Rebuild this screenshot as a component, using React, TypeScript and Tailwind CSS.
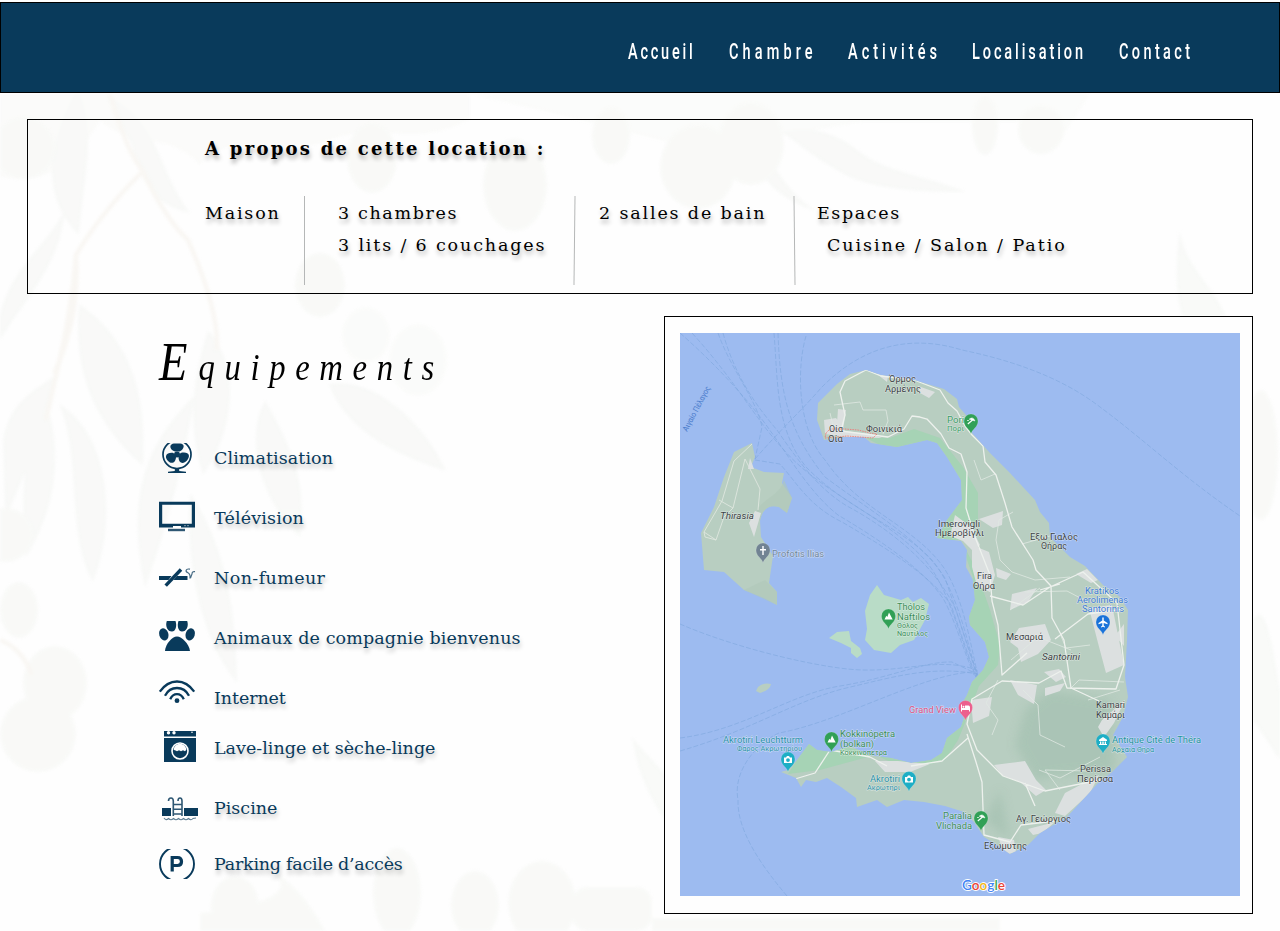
import type { ReactNode } from 'react';

const SLAB = "font-['DejaVu_Serif',serif]";
const SHADOW = '[text-shadow:1px_4px_4px_rgba(0,0,0,0.3)]';

const Foliage = () => (
  <svg className="pointer-events-none absolute inset-0 h-full w-full opacity-70 blur-[1.5px]" viewBox="0 0 1280 931" fill="#f3f5f2" aria-hidden="true">
    <g opacity=".75">
      <path d="M0 94H470V118C420 150 380 120 330 140C280 160 220 130 200 165C170 130 130 150 100 120C60 190 20 180 0 177Z" fill="#f8f9f6" />
      <path d="M470 94H1090L1060 140Q1035 155 1025 122H860L700 150L540 110Z" fill="#f8faf7" />
      <path d="M80 94C95 130 86 165 79 235C40 195 48 145 74 94Z" />
      <path d="M105 94C160 120 155 165 190 213C150 205 138 174 132 145Z" />
      <path d="M0 315C10 270 43 250 65 210C60 265 28 295 0 340Z" />
      <path d="M79 304C122 333 148 381 143 466C98 427 72 376 79 304Z" />
      <path d="M3 440C10 399 37 390 54 376C47 421 28 467 5 520Z" />
      <path d="M47 404C20 440 21 510 26 557C57 507 62 452 47 404Z" />
      <path d="M59 404C107 432 119 516 93 582C65 534 83 461 59 404Z" />
      <path d="M195 395C150 440 124 489 145 588C166 528 180 482 195 395Z" />
      <path d="M208 330C241 366 235 430 203 475C185 420 195 372 208 330Z" />
      <path d="M265 400C245 437 258 498 300 537C308 479 288 441 265 400Z" />
      <path d="M329 384C374 376 425 424 446 471C387 453 343 425 329 384Z" />
      <path d="M190 493C228 548 236 619 237 683C200 638 185 560 190 493Z" />
      <path d="M782 132C810 125 835 132 860 152C885 172 925 175 966 192C920 192 870 190 840 172C815 158 800 145 782 132Z" />
      <path d="M757 110C765 160 785 190 815 210C790 205 755 180 748 145Z" />
      <path d="M1180 230C1184 265 1210 281 1226 316L1182 316C1174 287 1176 256 1180 230Z" />
      <path d="M632 737C662 774 703 803 706 862C658 825 638 778 632 737Z" />
      <path d="M1253 620C1266 597 1273 650 1280 690V760L1253 720Z" />
    </g>
    <g fill="#f7f8f5">
      <circle cx="24" cy="148" r="31" /><ellipse cx="55" cy="683" rx="32" ry="37" />
      <circle cx="38" cy="734" r="38" /><circle cx="6" cy="535" r="27" />
      <ellipse cx="19" cy="610" rx="19" ry="28" />
      <ellipse cx="372" cy="158" rx="25" ry="35" /><ellipse cx="515" cy="185" rx="32" ry="46" />
      <ellipse cx="611" cy="136" rx="19" ry="28" /><ellipse cx="698" cy="167" rx="38" ry="42" />
      <ellipse cx="751" cy="144" rx="33" ry="41" /><ellipse cx="1041" cy="130" rx="23" ry="24" />
      <ellipse cx="985" cy="126" rx="13" ry="29" /><ellipse cx="320" cy="285" rx="25" ry="32" />
      <ellipse cx="418" cy="360" rx="29" ry="36" opacity=".6" /><ellipse cx="366" cy="335" rx="24" ry="28" opacity=".6" />
      <ellipse cx="235" cy="906" rx="24" ry="30" /><ellipse cx="397" cy="893" rx="24" ry="45" />
      <ellipse cx="475" cy="905" rx="24" ry="34" /><ellipse cx="542" cy="903" rx="34" ry="42" />
      <path d="M270 870Q302 886 325 931H200V913Q310 900 270 870Z" /><rect x="572" y="887" width="80" height="44" rx="15" />
      <ellipse cx="1261" cy="455" rx="17" ry="65" />
      <path d="M652 918H1000V931H652Z" />
    </g>
    <g fill="none" stroke="#f7f4ef" strokeWidth="4.5">
      <path d="M110 94Q126 150 142 170Q166 220 188 240Q219 310 217 350" /><path d="M142 172Q100 214 76 255Q72 310 55 380L46 420" />
      <path d="M76 255Q80 318 54 374" /><path d="M0 640Q22 648 32 675" />
    </g>
  </svg>
);

const links = [
  { label: 'Accueil', box: 'w-[101px]', track: 'tracking-[4.2px]' },
  { label: 'Chambre', box: 'w-[119px]', track: 'tracking-[6.2px]' },
  { label: 'Activités', box: 'w-[124px]', track: 'tracking-[6.1px]' },
  { label: 'Localisation', box: 'w-[147px]', track: 'tracking-[4.4px]' },
  { label: 'Contact', box: 'w-[80px]', track: 'tracking-[5.1px]' },
];

const Header = () => (
  <header className="mt-[2px] flex h-[91px] items-center justify-end border border-black bg-[#093a5b] pr-[80px]">
    <nav className="flex pt-[8px]">
      {links.map((l) => (
        <a key={l.label} href="#" className={`${l.box} block`}>
          <span className={`${l.track} inline-block origin-left scale-x-[.66] whitespace-nowrap font-['Roboto',sans-serif] text-[22px] leading-[26px] font-medium text-white`}>{l.label}</span>
        </a>
      ))}
    </nav>
  </header>
);

const Rule = ({ tilt }: { tilt: string }) => <div className={`h-[89px] w-px bg-[#b5b7b7] ${tilt}`} />;

const About = () => (
  <section className={`mx-[27px] mt-[26px] h-[175px] border border-black pl-[177px] text-black ${SLAB} ${SHADOW}`}>
    <h2 className="pt-[16px] text-[18px] leading-[26px] font-bold tracking-[2.27px] whitespace-nowrap">A propos de cette location :</h2>
    <div className="mt-[34px] flex text-[17.5px] leading-[32px] whitespace-nowrap">
      <p className="w-[99px] pt-px tracking-[1.8px]">Maison</p>
      <Rule tilt="" />
      <div className="w-[268.5px] pt-px pl-[33px]">
        <p className="tracking-[1.65px]">3 chambres</p>
        <p className="tracking-[1.85px]">3 lits / 6 couchages</p>
      </div>
      <Rule tilt="rotate-[0.65deg]" />
      <p className="w-[219.5px] pt-px pl-[24.5px] tracking-[1.85px]">2 salles de bain</p>
      <Rule tilt="-rotate-[0.65deg]" />
      <div className="pt-px pl-[22px]">
        <p className="tracking-[1.6px]">Espaces</p>
        <p className="pl-[10px] tracking-[1.95px]">Cuisine / Salon / Patio</p>
      </div>
    </div>
  </section>
);

const Fan = () => (
  <g>
    <clipPath id="fan-box"><path d="M0 0H40V30H0Z" /></clipPath>
    <g clipPath="url(#fan-box)">
      <circle cx="18" cy="11.5" r="14" fill="none" stroke="currentColor" strokeWidth="1.7" />
      <path d="M16 8.5C9 6 11 .5 15 .5H21C26 .5 26 6 20.5 8.5ZM14.5 10C7 9 5 14 9 18C13 22 17 19 17 14ZM21.5 10C30 8 32 13 28 17.5C24 22 19.5 20 19.5 14Z" />
      <circle cx="18" cy="11.5" r="3" />
      <path d="M15.8 25H20.2V28L27 28.7V30H9V28.7L15.8 28Z" />
    </g>
  </g>
);
const Tv = () => (
  <g>
    <path d="M0-1.3H36V24.5H0ZM3.2 1.8V20.8H32.8V1.8Z" fillRule="evenodd" />
    <path d="M14 23H22V25H14Z" fill="#fff" />
    <path d="M9 25.8H26V28.2H9Z" opacity=".85" />
    <path d="M25 22.7h2m1 0h2" stroke="#fff" strokeWidth=".7" opacity=".7" />
  </g>
);
const Smoke = () => (
  <g>
    <path d="M0 13H12.5L9.5 17H0ZM18 13H28.5V17H14.5Z" />
    <path d="M6.7 22.6L22 6.5" stroke="currentColor" strokeWidth="3.4" />
    <path d="M31 6.2C26.5 5.2 26 8.5 29 9.8Q31.500 11 31 15.5M36 8.7Q33 8 33 11L31.500 15" fill="none" stroke="currentColor" strokeWidth="1.2" opacity=".75" />
  </g>
);
const Paw = () => (
  <g>
    <path d="M7.800-2H16.500C18.300 3 16.500 8.600 13 8.600C8.500 8.600 6 3 7.800-2ZM19.500-2H28.200C30 3 27.500 8.600 23 8.600C19.500 8.600 17.700 3 19.500-2Z" />
    <ellipse cx="4.800" cy="11.300" rx="4.600" ry="6.200" transform="rotate(-18 4.800 11.300)" />
    <ellipse cx="31.200" cy="11.300" rx="4.600" ry="6.200" transform="rotate(18 31.200 11.300)" />
    <path d="M6 28C6.500 21 13 13.500 18 13.500C23 13.500 30 21 31 28Z" />
  </g>
);
const Wifi = () => (
  <g fill="none" stroke="currentColor" strokeWidth="2.300">
    <path d="M.8 8.700Q8-1.500 18-1.500T35.200 8.700M6 12.700Q10 5 18 5T30 12.700M11.200 16.200Q13.500 11.200 18 11.200T24.800 16.200" />
    <circle cx="18" cy="17.700" r="2.400" fill="currentColor" stroke="none" />
  </g>
);
const Washer = () => (
  <g>
    <path d="M5-2H37V3.500H5ZM5 5H37V29H5Z" />
    <circle cx="9.500" cy="-.2" r="1.700" fill="#fff" /><circle cx="15" cy="-.2" r="1.700" fill="#fff" /><circle cx="33" cy="-.7" r=".8" fill="#fff" />
    <circle cx="21" cy="18" r="8" fill="none" stroke="#fff" strokeWidth="1.600" />
    <path d="M14.800 17A6.200 6.200 0 0 1 27.200 17L26 18.300L24 17.300L22 18.300L20 17.300L18 18.300L16 17.300Z" fill="#fff" />
  </g>
);
const Pool = () => (
  <g>
    <path d="M3 15H12V23H3ZM25 15H39V23H25Z" />
    <path d="M9.500 8Q9.500 5 12 5Q14.300 5 14.300 8V23M19 8Q19 5 21 5Q23 5 23 8V23M14 11.500h9M14 16.300h9M14 21h9" fill="none" stroke="currentColor" strokeWidth="1.600" opacity=".85" />
    <path d="M5 25Q7 28 9.500 25.500Q12 28 14.500 25.500Q17 28 19.500 25.500Q22 28 24.500 25.500Q27 28 29.500 25.500Q32 28 34 25.500L37 25" fill="none" stroke="currentColor" strokeWidth="1.100" opacity=".65" />
  </g>
);
const Parking = () => (
  <g fill="none" stroke="currentColor">
    <clipPath id="parking-box"><path d="M0 0H40V30H0Z" /></clipPath>
    <circle cx="18" cy="15" r="17" strokeWidth="1.900" clipPath="url(#parking-box)" />
    <path d="M13.200 22.500V8.500H18.500Q22.500 8.500 22.500 12.500T18.500 16.500H13.200" strokeWidth="3.200" />
  </g>
);

const amenities: { label: string; icon: ReactNode; gap: string; track: string }[] = [
  { label: 'Climatisation', icon: <Fan />, gap: 'mb-[30px]', track: 'tracking-[0.07px]' },
  { label: 'Télévision', icon: <Tv />, gap: 'mb-[30px]', track: 'tracking-[0.15px]' },
  { label: 'Non-fumeur', icon: <Smoke />, gap: 'mb-[30px]', track: 'tracking-[0.4px]' },
  { label: 'Animaux de compagnie bienvenus', icon: <Paw />, gap: 'mb-[30px]', track: 'tracking-[0.12px]' },
  { label: 'Internet', icon: <Wifi />, gap: 'mb-[20px]', track: 'tracking-[-0.1px]' },
  { label: 'Lave-linge et sèche-linge', icon: <Washer />, gap: 'mb-[30px]', track: 'tracking-[0px]' },
  { label: 'Piscine', icon: <Pool />, gap: 'mb-[26px]', track: 'tracking-[0px]' },
  { label: 'Parking facile d’accès', icon: <Parking />, gap: '', track: 'tracking-[-0.25px]' },
];

const Amenities = () => (
  <section className="w-[637px] pl-[159px] pt-[19px]">
    <h1 className="h-[60px] whitespace-nowrap font-['Liberation_Serif',serif] text-[38px] leading-[60px] text-black italic">
      <span className="inline-block origin-left scale-x-[.86] tracking-[11.2px]"><span className="text-[54px] leading-none tracking-[13px]">E</span>quipements</span>
    </h1>
    <ul className="mt-[48px] text-[#093a5b]">
      {amenities.map((a) => (
        <li key={a.label} className={`${a.gap} flex h-[30px] items-center`}>
          <svg className="mr-[15px] h-[30px] w-[40px] overflow-visible" viewBox="0 0 40 30" fill="currentColor">{a.icon}</svg>
          <span className={`${a.track} ${SLAB} text-[17.5px] leading-[30px] whitespace-nowrap [text-shadow:1px_4px_4px_rgba(0,0,0,0.25)]`}>{a.label}</span>
        </li>
      ))}
    </ul>
  </section>
);

type Label = [text: string, x: number, y: number, width: number, size?: number, color?: string];
const labels: Label[] = [
  ['Όρμος', 889, 382, 27], ['Αρμένης', 885, 392, 36],
  ['Oία', 829, 432, 14], ['Οία', 828, 441.5, 15], ['Φοινικιά', 866, 432, 36],
  ['Pori', 947, 423, 17, 9, '#3b9b68'], ['Πορι', 947, 431, 17, 7, '#3b9b68'],
  ['Imerovigli', 938, 526.5, 42], ['Ημεροβίγλι', 935, 536, 49],
  ['Εξω Γιαλός', 1030, 540, 48], ['Θήρας', 1041, 549, 26],
  ['Fira', 977, 579, 15], ['Θήρα', 973, 588.5, 22],
  ['Kratikos', 1085, 593.5, 34, 9.4, '#3b79d4'], ['Aerolimenas', 1077, 603, 51, 9.4, '#3b79d4'], ['Santorinis', 1082, 612, 42, 9.4, '#3b79d4'],
  ['Profotis Ilias', 772, 556.5, 52, 9.4, '#71869a'],
  ['Thólos', 897, 610, 28, 9.4, '#3b8d57'], ['Naftilos', 897, 620, 33, 9.4, '#3b8d57'],
  ['Θόλος', 897, 628, 21, 7.2, '#3b8d57'], ['Ναυτίλος', 897, 635.5, 31, 7.2, '#3b8d57'],
  ['Μεσαριά', 1006, 640, 37],
  ['Grand View', 909, 713, 47, 9.6, '#df527f'],
  ['Kamari', 1096, 708, 29], ['Καμάρι', 1096, 717.5, 29],
  ['Akrotiri Leuchtturm', 723, 742.5, 80, 9.6, '#2b91a9'], ['Φάρος Ακρωτηρίου', 737, 750.5, 65, 7.2, '#2b91a9'],
  ['Kokkinópetra', 840, 736.5, 55, 9.4, '#3b8d57'], ['(bolkan)', 840, 747, 34, 9.4, '#3b8d57'], ['Κοκκινοπετρα', 840, 755, 47, 7.2, '#3b8d57'],
  ['Antique Cité de Théra', 1112, 743, 89, 9.6, '#22949d'], ['Αρχαία Θήρα', 1112, 751.5, 42, 7.2, '#22949d'],
  ['Akrotiri', 870, 781.5, 30, 9.4, '#2b91a9'], ['Ακρωτήρι', 867, 790, 33, 7.2, '#2b91a9'],
  ['Perissa', 1080, 772, 31], ['Περίσσα', 1077, 781.5, 36],
  ['Paralia', 943, 819, 29, 9.2, '#3b8d57'], ['Vlichada', 936, 828.5, 36, 9.2, '#3b8d57'],
  ['Αγ. Γεώργιος', 1016, 821.5, 55], ['Εξωμυτης', 984, 849, 43],
];

const Pin = ({ x, y, color, children }: { x: number; y: number; color: string; children: ReactNode }) => (
  <g transform={`translate(${x} ${y})`}>
    <path d="M0 11C-1 6-7 4.500-7-2A7 7 0 0 1 7-2C7 4.500 1 6 0 11Z" fill={color} stroke="#fff" strokeOpacity=".3" strokeWidth=".5" />
    <g fill="#fff" stroke="none">{children}</g>
  </g>
);
const Peak = () => <path d="M-4 1.500L-2.200-2.200L-1.200-1L.5-5.500L4.200 1.500Z" />;
const Brolly = () => (
  <g fill="none" stroke="#fff" strokeWidth="1.2"><path d="M-1.8-3.8Q2-7 4-2Z" fill="#fff" strokeWidth=".5" /><path d="M1.5-3L-3.2 1" /><path d="M-3.7-2.5h1.4" /></g>
);
const Camera = () => <path fillRule="evenodd" d="M-4-3.5H-2L-1-5H1L2-3.5H4V2H-4ZM0-2.8A1.9 1.9 0 1 0 0 1A1.9 1.9 0 1 0 0-2.8Z" />;

const IslandMap = () => (
  <svg className="block h-[563px] w-[560px] font-[Roboto,sans-serif]" viewBox="680 333 560 563" role="img">
    <defs>
      <clipPath id="land"><use href="#main" /></clipPath>
      <filter id="soft"><feGaussianBlur stdDeviation="5" /></filter>
    </defs>
    <path fill="#9dbbf0" d="M680 333h560v563H680Z" />
    <g fill="none" stroke="#80a8df" strokeWidth=".65" strokeDasharray="5 2">
      <path d="M680 333C720 368 753 406 769 429C790 458 810 493 838 515C880 540 925 570 944 600C955 620 965 655 975 677" />
      <path d="M692 333C735 380 755 419 784 450C820 492 885 516 925 560C950 590 960 640 976 677" />
      <path d="M718 333C731 370 757 400 762 427L755 459" /><path d="M723 333C735 377 758 408 777 430C797 459 817 488 847 506C890 529 935 565 956 610L977 676" />
      <path d="M774 333C778 380 775 430 807 468C850 511 900 526 932 560C956 589 966 635 977 676" />
      <path d="M778 333C780 390 787 430 825 477C870 511 919 538 945 578L978 676" />
      <path d="M806 336C796 370 798 430 825 460C860 512 914 525 944 568C963 597 970 642 978 676" />
      <path d="M755 459C780 430 803 409 821 388C865 343 914 335 962 350C1010 360 1058 376 1096 404C1145 440 1180 475 1240 516" />
      <path d="M755 460L780 464C797 483 809 506 842 522C890 550 933 578 951 605L976 677" />
      <path d="M680 624C740 650 829 670 864 670C910 671 940 657 977 670L973 707" />
      <path d="M680 738C744 730 790 694 840 686C890 678 925 661 952 662L977 674" />
      <path d="M680 751C752 730 788 704 842 689C890 678 930 665 977 674" />
      <path d="M972 672C920 675 840 722 779 733C760 741 732 769 738 800C737 830 760 864 787 896" />
    </g>
    <path fill="#b8cec1" d="M752 443L755 457L751 467L764 472L784 473L782 483L792 498L787 513L779 507C768 504 762 510 760 521L761 537L773 556L769 583L777 592V605L764 598L744 590L724 572L704 570L701 533L714 507L724 477L734 452Z" />
    <path fill="#afc8b9" d="M784 480L792 498L787 513L779 507C768 504 762 510 760 521L755 515C760 498 779 498 784 480ZM744 590L765 580L777 592V605Z" opacity=".6" />
    <path fill="#b9dcc7" d="M877 585L884 595L901 600L908 597L913 602L921 598L929 604L925 620L914 640L900 645L891 653L874 650L865 640L867 629L865 611L870 595ZM829 638L837 632L849 631L851 641L860 648L862 654L857 658L851 653V648L841 643Z" />
    <path fill="#b8cec1" d="M758 687Q764 682 771 684Q770 690 760 693L756 691Z" />
    <path id="main" fill="#b8cec1" d="M866 370L881 375L914 380L944 389L957 399L959 407L966 415L972 433L990 453L1010 473L1035 500L1040 512L1049 523L1050 537L1070 557L1085 566L1103 585L1120 597L1128 610L1127 640L1125 677L1128 697L1123 717L1113 735L1127 757L1112 772L1098 783L1067 817L1040 833L1028 845L1010 854L997 845L984 837L974 822L964 812L945 806L924 802L904 800L887 807L877 800L857 807L856 798L841 787L827 778L816 782L806 780L801 787L796 778L781 772L788 770L797 760L809 744L817 750L831 752L851 746L868 755L891 758L911 763L931 760L942 753L947 738L961 727L964 718L960 707L967 695L972 682L983 670L989 657L985 642L970 625L969 617L975 600L973 580L966 567L967 550L961 541L937 538L947 520L962 500L961 480L947 457L937 443L927 440L897 447L871 443L864 437L846 437L824 440L821 431L817 420L818 403L837 384L850 374Z" />
    <g clipPath="url(#land)">
      <g fill="#a2d4b3">
        <path d="M864 437L890 438L914 429L940 438L963 467L978 493V520L957 537L966 550L975 567L990 610L1000 645L998 665L979 686L967 718L958 740L945 760L909 770L875 755L820 770L788 774L810 740L860 750L910 757L940 745L962 720L955 700L976 670L984 647L963 615L973 577L960 540L930 540L955 500L940 448L890 450Z" opacity=".85" />
      </g>
      <g fill="#a4c1b1" filter="url(#soft)" opacity=".7">
        <path d="M1025 710L1050 690L1110 700L1115 770L1060 775L1035 780L1015 745ZM1000 790L1010 840L985 820Z" />
      </g>
      <g fill="#dce0e0">
        <path d="M824 420L836 418L845 431L870 434L882 438L848 437L825 434ZM838 409L846 410L843 430L837 423ZM877 374L888 376L887 382ZM918 386L935 392L929 398L920 393Z" />
        <path d="M955 515L971 527L980 545L974 552L963 541L950 536ZM972 545L989 552L995 575L990 592L977 586L972 567ZM979 519L1003 511L1002 525L993 528ZM1012 594L1037 588L1028 602L1010 610ZM996 568L1011 574L1006 580L997 577ZM1019 628L1045 624L1051 640L1038 654L1021 662L1018 648L1010 642ZM1089 608L1112 605L1124 665L1106 673L1098 643ZM1124 624V646L1115 636ZM1010 680L1037 685L1034 704L1018 695ZM1045 688L1065 683L1060 691L1045 696ZM1044 672L1059 669L1066 677L1056 682ZM971 700L992 697L989 716L973 723ZM994 765L1025 761L1036 780L1046 790L1036 796L1020 782L1003 776ZM1099 775L1090 793L1065 816L1055 813L1065 793ZM1028 829L1055 822L1042 833L1033 835ZM998 837L1014 840L1016 852L1005 855ZM875 761L898 761L930 764L910 772L885 772ZM1102 720L1125 700L1114 723L1104 737L1098 727ZM1076 574L1087 569L1098 580L1091 583Z" />
      </g>
      <g fill="none" stroke="#dfe8e2" strokeWidth=".8">
        <path d="M834 405L860 402L863 410H886L888 421L883 434M830 413L834 430M1070 577L1035 580L1012 572L1000 560L996 540L999 520L1013 512M1022 544L1050 536M1010 610L1040 588M1025 592L1067 591L1086 601M998 680L986 703L998 720L992 735M1023 690L1038 705L1040 735L1065 747M1039 770L1060 778L1100 757M1060 790L1045 770L1088 771M1011 660L1038 637L1071 650M1061 636L1066 648L1090 645M1070 689L1079 680L1124 682M1120 690L1088 700M974 460L981 480L995 474" />
      </g>
      <g fill="none" stroke="#edf1ed" strokeWidth="1.3" strokeLinejoin="round">
        <path d="M866 370L845 381L840 392L845 415L841 431L888 437L904 429L912 416L920 417L927 419L941 434L949 448L961 454L967 472L966 508L975 537L990 575L992 601L998 625L1002 675L1027 653M866 370L881 376L914 380L940 390L948 403L957 411L965 426L972 435L983 446L985 462L996 475L1005 503L1012 527L1033 560L1036 570L1051 586L1052 618L1064 640L1071 688L1099 701" />
        <path d="M990 596L1023 605L1050 587L1083 572L1117 603L1124 665L1116 689L1067 688L1061 671L1039 683L1002 681L972 699L967 724L977 750L1003 776L1045 791L1100 780M967 734L976 762L982 782L984 835L1010 842L1021 825L1055 821M887 766L870 757L830 750L815 773L795 779M911 766L942 761L968 738M1025 783L1035 806M1055 639L1088 614L1124 609M1040 590L1060 584" />
      </g>
    </g>
    <g fill="none" stroke="#dfe7df" strokeWidth=".9"><path d="M752 444L734 461L722 501L704 532L716 540L724 517L733 508L745 459L760 489L758 510M704 532L705 537L716 540M719 500L733 508" /><path fill="#dce0e0" stroke="none" d="M750 458L754 469L748 469ZM755 511L761 513L754 537L749 523Z" /></g>
    <path d="M826 433L825 438L847 436L873 438L877 434L870 433L858 430L845 429L830 429Z" fill="none" stroke="#ec7977" strokeWidth=".9" strokeDasharray="1.5 1" />

    <g stroke="#fff" strokeOpacity=".5" strokeWidth="1" paintOrder="stroke" strokeLinejoin="round">
      {labels.map(([text, x, y, width, size = 9.4, color = '#3c4245']) => (
        <text key={text + y} x={x} y={y} textLength={width} lengthAdjust="spacingAndGlyphs" fontSize={size} fill={color}>{text}</text>
      ))}
      <text x="720" y="518.5" fontSize="9.400" fontStyle="italic" fill="#3c4245" textLength="34" lengthAdjust="spacingAndGlyphs">Thirasia</text>
      <text x="1042" y="660" fontSize="9.400" fontStyle="italic" fill="#3c4245" textLength="38" lengthAdjust="spacingAndGlyphs">Santorini</text>
    </g>
    <text transform="translate(687 432) rotate(-62)" fontSize="8" fill="#4578ca" textLength="50" lengthAdjust="spacingAndGlyphs">Αιγαίο Πέλαγος</text>
    <Pin x={763} y={552} color="#718393"><path d="M-.7-6H.7V-3H3V-1.6H.7V3H-.7V-1.6H-3V-3H-.7Z" /></Pin>
    <Pin x={971} y={423} color="#31a056"><Brolly /></Pin>
    <Pin x={888.5} y={618} color="#31a056"><Peak /></Pin>
    <Pin x={831.5} y={741} color="#31a056"><Peak /></Pin>
    <Pin x={981} y={820} color="#31a056"><Brolly /></Pin>
    <Pin x={788} y={761} color="#1eaec5"><Camera /></Pin>
    <Pin x={909} y={780.5} color="#1eaec5"><Camera /></Pin>
    <Pin x={1103} y={743} color="#1eaec5"><path d="M-4-3.3L0-6L4-3.3V-2H-4ZM-3-1.4H-1.7V1H-3ZM-.7-1.4H.7V1H-.7ZM1.7-1.4H3V1H1.7ZM-4 1H4V2H-4Z" /></Pin>
    <Pin x={1103} y={624} color="#1a73d9"><path d="M-.7-6.5H.7V-3.5L4.5-1V.2L.7-1V1.5L2 2.7V3.5L0 2.8L-2 3.5V2.7L-.7 1.5V-1L-4.5 .2V-1L-.7-3.5Z" /></Pin>
    <Pin x={965.5} y={709.5} color="#ec5f8d"><path d="M-4.5-5H-3.5V-1.5H-.5V-4H3Q4.5-4 4.5-2V2H3.5V.5H-3.5V2H-4.5ZM-2-3.8A1 1 0 1 1-2-1.8A1 1 0 1 1-2-3.8Z" /></Pin>
    <text x="962" y="890" textLength="43" lengthAdjust="spacingAndGlyphs" fontSize="14" fontFamily="Lato, sans-serif" fontWeight="600" stroke="#fff" strokeWidth="1.8" paintOrder="stroke" strokeLinejoin="round">
      <tspan fill="#4285f4">G</tspan><tspan fill="#ea4335">o</tspan><tspan fill="#f3b613">o</tspan><tspan fill="#4285f4">g</tspan><tspan fill="#34a853">l</tspan><tspan fill="#ea4335">e</tspan>
    </text>
  </svg>
);

export default function App() {
  return (
    <div className="relative h-[931px] w-[1280px] overflow-hidden bg-[#fefefe]">
      <Foliage />
      <div className="relative flow-root">
        <Header />
        <main>
          <About />
          <div className="mx-[27px] mt-[22px] flex">
            <div className="-ml-[27px]"><Amenities /></div>
            <aside className="ml-[27px] h-[598px] w-[589px] border border-black bg-[#fefefe] pt-[16px] pl-[15px]"><IslandMap /></aside>
          </div>
        </main>
      </div>
    </div>
  );
}
